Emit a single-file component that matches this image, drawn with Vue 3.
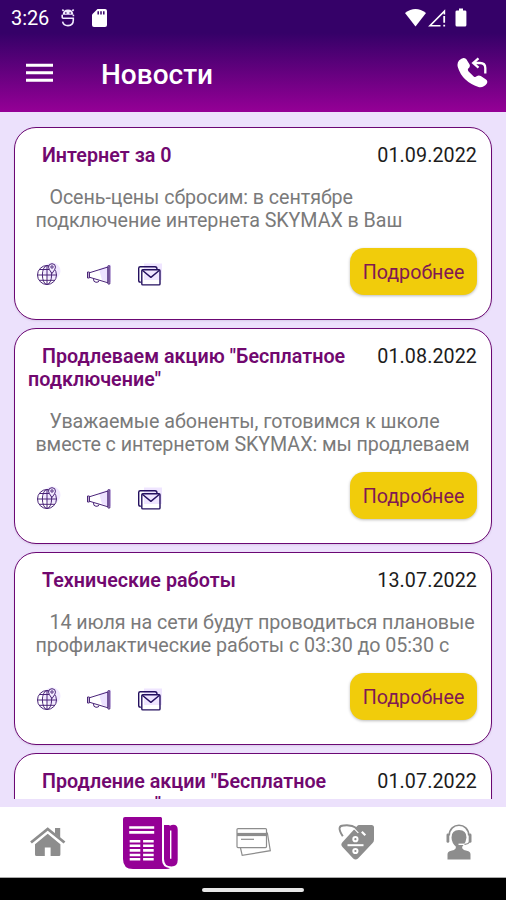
<script setup>
const news = [
  { title: ['Интернет за 0'], date: '01.09.2022', text: ['Осень-цены сбросим: в сентябре', 'подключение интернета SKYMAX в Ваш'] },
  { title: ['Продлеваем акцию "Бесплатное', 'подключение"'], date: '01.08.2022', text: ['Уважаемые абоненты, готовимся к школе', 'вместе с интернетом SKYMAX: мы продлеваем'] },
  { title: ['Технические работы'], date: '13.07.2022', text: ['14 июля на сети будут проводиться плановые', 'профилактические работы с 03:30 до 05:30 с'] },
  { title: ['Продление акции "Бесплатное', 'подключение"'], date: '01.07.2022' },
]
</script>

<template>
  <div class="screen">
    <header class="top">
      <div class="status">
        <span class="time">3:26</span>
        <svg class="debug" width="16" height="20" viewBox="0 0 16 20" fill="none" stroke="#f1eaff" stroke-width="1.6">
          <path d="M2.2 6.8V9.3Q2.2 10.2 3.2 10.2H13.3V12Q13.3 17.6 8 17.6Q3.4 17.6 2.6 13.6M13.4 8.3V6.8M3.6 3L2.4 1.4M12.4 3L13.6 1.4" />
          <path d="M2.6 6.8Q3 1.6 8 1.6Q13 1.6 13.4 6.8Z" fill="#f1eaff" stroke="none" />
          <path d="M5.2 5H6.5M9.5 5H10.8" stroke="#350168" stroke-width="1.3" />
        </svg>
        <svg class="sd" width="15" height="18" viewBox="0 0 15 18">
          <path fill="#fff" d="M5.5 0H13Q15 0 15 2V16Q15 18 13 18H2Q0 18 0 16V5.5Z" />
          <path stroke="#350168" stroke-width="1.5" d="M6.2 2.2V5.4M9 2.2V5.4M11.8 2.2V5.4" />
        </svg>
        <span class="spring"></span>
        <svg width="63" height="20" viewBox="0 0 63 20">
          <path fill="#fff" d="M0 5Q10.5 -3.2 21 5L10.5 18.4Z" />
          <path fill="none" stroke="#fff" stroke-width="1.6" d="M35.5 17.7H25L39.4 3.3V6.5" />
          <path stroke="#fff" stroke-width="1.8" d="M39.2 8V14.8M39.2 16.7V18.5" />
          <path fill="#fff" d="M54 .4H58V2.4H60Q61.4 2.4 61.4 3.8V17Q61.4 18.5 60 18.5H52Q50.5 18.5 50.5 17V3.8Q50.5 2.4 52 2.4H54Z" />
        </svg>
      </div>
      <div class="bar">
        <svg width="27" height="20" viewBox="0 0 27 20" stroke="#fff" stroke-width="3">
          <path d="M0 2.3H27M0 9.8H27M0 17.3H27" />
        </svg>
        <h1>Новости</h1>
        <svg width="31" height="32" viewBox="0 0 31 32">
          <path fill="#fff" d="M2 3.5Q6-.8 9.2 2L12.6 7.4Q13.6 9.6 11.3 11.5Q10.3 12.7 11.6 14.4L17 19.7Q18.3 20.5 19.6 19.3Q21.7 17.8 23.8 19L29 22.5Q31.2 24.2 29.7 26.7Q26.5 31 21.5 30Q5 24.4.8 10Q-.2 6 2 3.5Z" />
          <path fill="none" stroke="#fff" stroke-width="2.3" d="M21.5 1.3L16.2 6L21.5 10.7M16.5 6H23Q28.3 6 28.3 11V16.5" />
        </svg>
      </div>
    </header>

    <main class="list">
      <article v-for="item in news" :key="item.date" class="card">
        <div class="heading">
          <h2><span v-for="line in item.title" :key="line">{{ line }}</span></h2>
          <time>{{ item.date }}</time>
        </div>
        <p v-if="item.text"><span v-for="line in item.text" :key="line">{{ line }}</span></p>
        <div v-if="item.text" class="actions">
          <svg width="132" height="32" viewBox="0 0 132 32" fill="none" stroke="#4a2478" stroke-width="1">
            <circle cx="17" cy="13" r="8.5" fill="#f1e8ff" stroke="none" />
            <circle cx="12" cy="17" r="9.5" />
            <ellipse cx="12" cy="17" rx="4.6" ry="9.5" />
            <path d="M12 7.5V26.5M2.5 17H21.5M4.5 11.5H19.5M4.5 22.3H19.5" />
            <path fill="#f1e8ff" d="M17 15.5Q13.5 11 13.5 9.2A3.5 3.5 0 0 1 20.5 9.2Q20.5 11 17 15.5Z" />
            <circle cx="17" cy="9" r="1.2" />
            <path fill="#ede2ff" stroke="none" d="M64 11L76 6.5V24.5L67 22Z" />
            <path d="M54.3 14.8V19.2L73 24.8V9L54.3 14.8ZM52.5 14V20H54.3V14ZM73 7.8H74.8V26H73ZM58.5 20.9Q58.2 24 61 24.3Q64 24.5 64 22.5" />
            <path fill="#efe5ff" stroke="none" d="M109 5.5H127V22H109Z" />
            <g stroke="#24105f" stroke-width="1.4" stroke-linejoin="round">
              <path d="M105.8 24.3Q103.7 24.3 103.7 22.5V10.3Q103.7 8.7 105.3 8.7H120Q122 8.7 122 11" />
              <rect x="106.8" y="11.7" width="18.2" height="15.2" rx="1" />
              <path d="M107.3 12.3L115.9 19.4L124.5 12.3" />
            </g>
          </svg>
          <button>Подробнее</button>
        </div>
      </article>
    </main>

    <nav>
      <svg class="home" width="36" height="32" viewBox="0 0 36 32">
        <path fill="#8d8d8d" d="M5 17.2L17.7 6.8L30.4 17.2V27.5Q30.4 29 29 29H20.6V20.5H14.8V29H6.5Q5 29 5 27.5Z" />
        <path fill="none" stroke="#fff" stroke-width="1.2" d="M2.5 17.7L17.7 5.2L32.9 17.7" />
        <path fill="none" stroke="#8d8d8d" stroke-width="2.8" d="M1 15.5L17.7 2L34.5 15.5" />
        <path fill="#8d8d8d" d="M25 1H30.2V11L25 6.8Z" />
      </svg>
      <svg class="paper" width="56" height="54" viewBox="0 0 56 54">
        <path fill="#950096" d="M2 0H37.7Q39 0 39 1.5V43Q39 50 47 51.3Q46 52 43 52H10Q0 52 0 42V2Q0 0 2 0Z" />
        <path fill="#950096" fill-rule="evenodd" d="M41 8H45.7Q46.6 8 47 8.7Q48.6 7.8 50.4 7.8Q54.7 7.8 54.7 12.5V43Q54.7 49.5 48.5 49.5Q41 49.5 41 42ZM47 41.8H48.4V13.5H47Z" />
        <g stroke="#fff" stroke-width="2.6">
          <path d="M6.2 10.5H31.2M6.2 15.4H31.2" />
          <path stroke-dasharray="10.6 2.8" d="M6.7 24.3H31M6.7 28.8H31M6.7 33.4H31M6.7 38H31M6.7 42.3H31" />
        </g>
      </svg>
      <svg width="36" height="30" viewBox="0 0 36 30" fill="none" stroke="#8d8d8d" stroke-width="1.2">
        <path d="M4.5 21L6.2 28.3L34.3 23.7L31.3 5.5" />
        <rect x="1" y="1.6" width="29.5" height="19" rx="1" fill="#fff" />
        <path stroke-width="3.2" d="M1 7.5H30.5" />
        <path d="M5 12.3H18" />
      </svg>
      <svg width="38" height="38" viewBox="0 0 38 38">
        <path fill="#8d8d8d" d="M21 2H33.5Q36 2 36 4.5V16.7Q36 18.7 34.4 20.3L20 35.4Q17.6 37.5 15.2 35.4L4.5 24Q2.2 21.8 4.4 19.3L19 3.2Q20 2 21 2Z" />
        <path fill="none" stroke="#fff" stroke-width="1.2" d="M13.5 4.2Q18 6.4 20.3 10" />
        <path fill="none" stroke="#8d8d8d" stroke-width="1.9" d="M4.8 13.3Q-2.3 2.3 6 2.5Q13 1.5 19 5.2" />
        <g fill="none" stroke="#fff" stroke-width="2">
          <path d="M23.8 8.8L27.3 12.2" stroke-width="2.2" />
          <circle cx="17.4" cy="16.2" r="2.1" /><circle cx="17.4" cy="28" r="2.1" />
          <path d="M9.5 22.2H25.5" />
        </g>
      </svg>
      <svg width="26" height="36" viewBox="0 0 26 36">
        <path fill="none" stroke="#8d8d8d" stroke-width="1.7" d="M3.2 11.5C3.2-2.2 22.8-2.2 22.8 11.5" />
        <rect x="0.5" y="9.5" width="2.8" height="9.3" rx="1.4" fill="#8d8d8d" />
        <rect x="22.7" y="9.5" width="2.8" height="9.3" rx="1.4" fill="#8d8d8d" />
        <path fill="#8d8d8d" d="M5.5 13.5Q5.5 6 13 6Q20.5 6 20.5 13.5Q20.2 18.2 17 21.8L16.2 22.8V24.3Q17.5 26.3 20.8 26.8Q24.5 27.5 24.5 30.5V35.5H1.5V30.5Q1.5 27.5 5.2 26.8Q8.5 26.3 9.8 24.3V22.5Q5.7 19 5.5 13.5Z" />
        <path fill="none" stroke="#fff" stroke-width="1.4" d="M12.5 20.3H18.5" />
        <path fill="none" stroke="#8d8d8d" stroke-width="1.2" d="M23.5 18Q22 20.6 18.5 20.4" />
      </svg>
    </nav>
    <footer><span class="handle"></span></footer>
  </div>
</template>

<style>
body { margin: 0; }
</style>

<style scoped>
.screen {
  display: flex;
  flex-direction: column;
  width: 506px;
  height: 900px;
  overflow: hidden;
  background: #ece1fc;
  font-family: Roboto, sans-serif;
}
.top {
  flex: none;
  height: 112px;
  background: linear-gradient(#350168 0, #350168 33px, #950096 112px);
  color: #fff;
}
.status {
  display: flex;
  align-items: center;
  box-sizing: border-box;
  height: 35px;
  padding: 0 38px 0 11px;
}
.time { width: 49px; font-size: 20px; letter-spacing: -0.1px; }
.sd { margin-left: 16px; }
.spring { flex: 1; }
.bar {
  display: flex;
  align-items: center;
  height: 76px;
  padding: 0 18px 0 26px;
}
h1 {
  flex: 1;
  margin: 3px 0 0 48px;
  font-size: 28px;
  font-weight: 500;
  line-height: 33px;
}
.list {
  display: flex;
  flex: none;
  flex-direction: column;
  gap: 8px;
  box-sizing: border-box;
  height: 687px;
  padding: 15px 14px 0;
  overflow: hidden;
}
.card {
  flex: none;
  box-sizing: border-box;
  min-height: 193px;
  padding: 16px 14px 24px 13px;
  border: 1px solid #6b0874;
  border-radius: 22px;
  background: #fff;
  box-shadow: 0 1px 2px #b8a8c966;
}
.heading { display: flex; justify-content: space-between; }
h2, p {
  margin: 0;
  font-size: 19.7px;
  line-height: 23px;
  white-space: nowrap;
}
h2 { color: #71086f; font-weight: 600; letter-spacing: 0.03px; }
h2 span, p span { display: block; }
h2 span:first-child, p span:first-child { padding-left: 14px; }
time { font-size: 19.7px; line-height: 23px; letter-spacing: 0.08px; color: #1c1c1c; }
p { margin-top: 19px; padding-left: 7.4px; color: #7a7a7a; letter-spacing: -0.06px; }
.actions {
  display: flex;
  justify-content: space-between;
  align-items: flex-start;
  margin-top: 16px;
  padding-left: 7px;
}
.actions svg { margin-top: 10px; }
button {
  width: 127px;
  height: 47px;
  padding: 2px 0 0;
  border: 0;
  border-radius: 14px;
  background: #f1cc0b;
  box-shadow: 0 1px 3px #0004;
  color: #801a52;
  font: 19.7px/45px Roboto, sans-serif;
}
nav {
  display: grid;
  grid-template-columns: 94px 112px 95px 111px 94px;
  flex: none;
  place-items: center;
  height: 70px;
  margin-top: 8px;
  background: #fff;
  border-bottom: 1px solid #aaa;
}
.home { margin: 2px 0 0 1px; }
.paper { margin: 4px 0 0 2px; }
footer {
  display: flex;
  flex: 1;
  justify-content: center;
  align-items: center;
  padding-top: 2px;
  background: #000;
}
.handle { width: 102px; height: 4px; border-radius: 2px; background: #e6e6e6; }
</style>
